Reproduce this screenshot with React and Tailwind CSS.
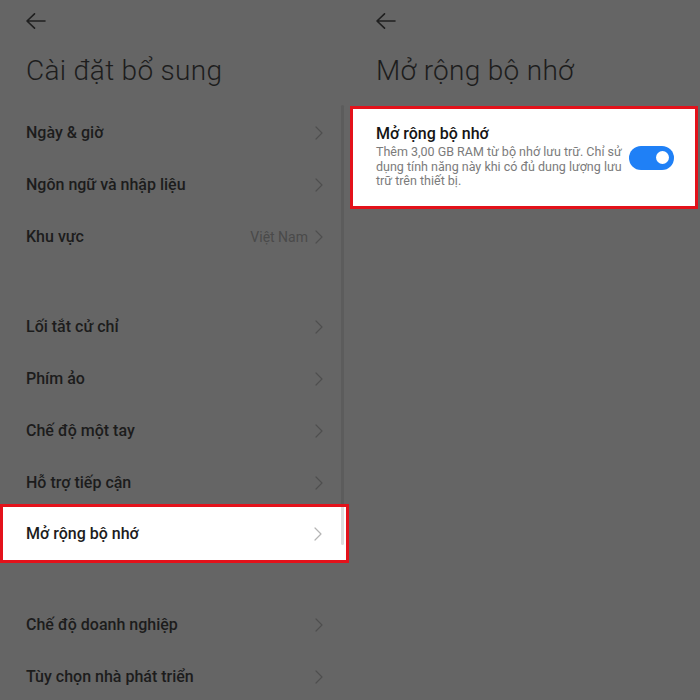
import React from 'react';

const font = { fontFamily: 'Roboto, "Noto Sans", "Liberation Sans", sans-serif' };

function BackArrow() {
  return (
    <svg width="20" height="16" viewBox="0 0 20 16" className="text-[#1f1f1f]">
      <path d="M1 8H19M8.5 0.8L1 8L8.5 15.2" fill="none" stroke="currentColor" strokeWidth="1.6" strokeLinecap="round" strokeLinejoin="round" />
    </svg>
  );
}

function Chevron({ light }) {
  return (
    <svg width="8" height="14" viewBox="0 0 8 14" className={light ? 'text-[#b4b4b4]' : 'text-[#4e4e4e]'}>
      <path d="M1 1L7 7L1 13" fill="none" stroke="currentColor" strokeWidth="1.2" strokeLinecap="round" strokeLinejoin="round" />
    </svg>
  );
}

function Row({ label, value }) {
  return (
    <div className="h-[52px] flex items-center justify-between pl-[26px] pr-[27px]">
      <span className="text-[16px] font-medium text-[#1c1c1c]">{label}</span>
      <div className="flex items-center gap-[7px]">
        {value && <span className="text-[14px] text-[#4a4a4a]">{value}</span>}
        <Chevron />
      </div>
    </div>
  );
}

function Divider() {
  return <div className="mx-[26px] my-[19px] h-px bg-[#5f5f5f]" />;
}

function Header({ title }) {
  return (
    <div className="pl-[26px]">
      <div className="h-[40px] flex items-center pt-[1px]">
        <BackArrow />
      </div>
      <h1 className="mt-[11px] h-[53px] text-[28px] font-light text-[#1d1d1d] leading-[40px] tracking-[0.3px]">{title}</h1>
    </div>
  );
}

export default function App() {
  return (
    <div style={font} className="w-[700px] h-[700px] flex bg-[#656565] overflow-hidden">
      {/* Cài đặt bổ sung */}
      <div className="w-[350px] shrink-0 flex flex-col relative">
        <Header title="Cài đặt bổ sung" />
        <div className="mt-[3px]">
          <Row label="Ngày & giờ" />
          <Row label="Ngôn ngữ và nhập liệu" />
          <Row label="Khu vực" value="Việt Nam" />
        </div>
        <Divider />
        <div>
          <Row label="Lối tắt cử chỉ" />
          <Row label="Phím ảo" />
          <Row label="Chế độ một tay" />
          <Row label="Hỗ trợ tiếp cận" />
          <div className="relative z-10 -mt-[5px] -mb-[2px] h-[59px] w-[349px] bg-white border-[3px] border-[#e3121b] flex items-center justify-between pl-[23px] pr-[24px]">
            <span className="text-[16px] font-medium text-[#1c1c1c]">Mở rộng bộ nhớ</span>
            <Chevron light />
          </div>
        </div>
        <Divider />
        <div>
          <Row label="Chế độ doanh nghiệp" />
          <Row label="Tùy chọn nhà phát triển" />
        </div>
        {/* scroll indicator */}
        <div className="absolute left-[341px] top-[105px] w-[3px] h-[439px] rounded-full bg-[#5c5c5c]" />
        <div className="absolute z-20 left-[341px] top-[507px] w-[3px] h-[38px] rounded-b-full bg-[#dedede]" />
      </div>

      {/* Mở rộng bộ nhớ */}
      <div className="w-[350px] shrink-0 flex flex-col">
        <Header title="Mở rộng bộ nhớ" />
        <div className="mt-[2px] w-[348px] h-[103px] bg-white border-[3px] border-[#e3121b] flex items-center pl-[23px] pr-[21px]">
          <div className="flex-1 -mt-[2px]">
            <div className="text-[16px] font-medium text-[#141414] leading-[20px]">Mở rộng bộ nhớ</div>
            <p className="mt-[1px] w-[250px] text-[12.5px] leading-[14.5px] text-[#7b7b7b]">
              Thêm 3,00 GB RAM từ bộ nhớ lưu trữ. Chỉ sử dụng tính năng này khi có đủ dung lượng lưu trữ trên thiết bị.
            </p>
          </div>
          <div className="w-[45px] h-[24px] rounded-full bg-[#1f80f6] flex items-center justify-end pr-[5px] shrink-0">
            <div className="w-[13px] h-[13px] rounded-full bg-white" />
          </div>
        </div>
      </div>
    </div>
  );
}
